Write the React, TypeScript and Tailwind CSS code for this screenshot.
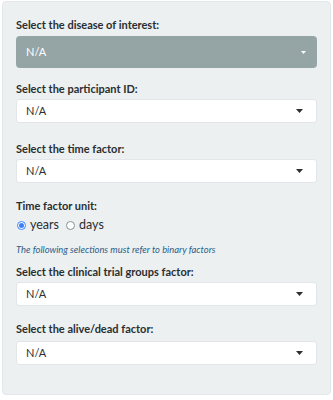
import React from "react";

function Caret({ color = "#333", w = 7, h = 4 }: { color?: string; w?: number; h?: number }) {
  return (
    <svg width={w} height={h} viewBox={`0 0 ${w} ${h}`} className="shrink-0">
      <polygon points={`0,0 ${w},0 ${w / 2},${h}`} fill={color} />
    </svg>
  );
}

function WhiteSelect({ className = "" }: { className?: string }) {
  return (
    <div
      className={`flex h-[24px] items-center justify-between rounded-[3px] border border-[#e2e6e8] bg-white pl-[9px] pr-[13px] text-[11px] text-[#2b2f31] ${className}`}
    >
      <span>N/A</span>
      <Caret color="#2b2f31" />
    </div>
  );
}

function Label({ children, className = "" }: { children: React.ReactNode; className?: string }) {
  return (
    <p className={`text-[11px] font-bold leading-[15px] text-[#2a2e30] ${className}`}>
      {children}
    </p>
  );
}

function Radio({ checked, label }: { checked?: boolean; label: string }) {
  return (
    <label className="flex items-center gap-[4px]">
      <span
        className={`flex h-[9px] w-[9px] items-center justify-center rounded-full border bg-white ${
          checked ? "border-[#3b82f6]" : "border-[#8a9094]"
        }`}
      >
        {checked && <span className="h-[5px] w-[5px] rounded-full bg-[#3b82f6]" />}
      </span>
      <span>{label}</span>
    </label>
  );
}

export default function App() {
  return (
    <div className="h-[400px] w-[333px] bg-white pt-[1px] font-['Lato','Open_Sans',sans-serif]">
      <div className="mx-[2px] h-[394px] rounded-[4px] border border-[#e3e7e9] bg-[#ecf0f1] px-[13px] pt-[15px]">
        <Label>Select the disease of interest:</Label>
        <div className="mt-[4px] flex h-[32px] items-center justify-between rounded-[4px] bg-[#95a5a6] pl-[10px] pr-[11px] text-[11px] text-white">
          <span>N/A</span>
          <Caret color="#ffffff" w={5} h={3} />
        </div>

        <Label className="mt-[13px]">Select the participant ID:</Label>
        <WhiteSelect className="mt-[3px]" />

        <Label className="mt-[18px]">Select the time factor:</Label>
        <WhiteSelect className="mt-[3px]" />

        <Label className="mt-[15px]">Time factor unit:</Label>
        <div className="mt-[4px] flex items-center gap-[7px] pl-[1px] text-[12.5px] leading-[16px] text-[#2b2f31]">
          <Radio checked label="years" />
          <Radio label="days" />
        </div>

        <p className="mt-[10px] text-[9.4px] italic leading-[13px] text-[#2b5d88]">
          The following selections must refer to binary factors
        </p>

        <Label className="mt-[8px]">Select the clinical trial groups factor:</Label>
        <WhiteSelect className="mt-[3px]" />

        <Label className="mt-[15px]">Select the alive/dead factor:</Label>
        <WhiteSelect className="mt-[5px]" />
      </div>
    </div>
  );
}
